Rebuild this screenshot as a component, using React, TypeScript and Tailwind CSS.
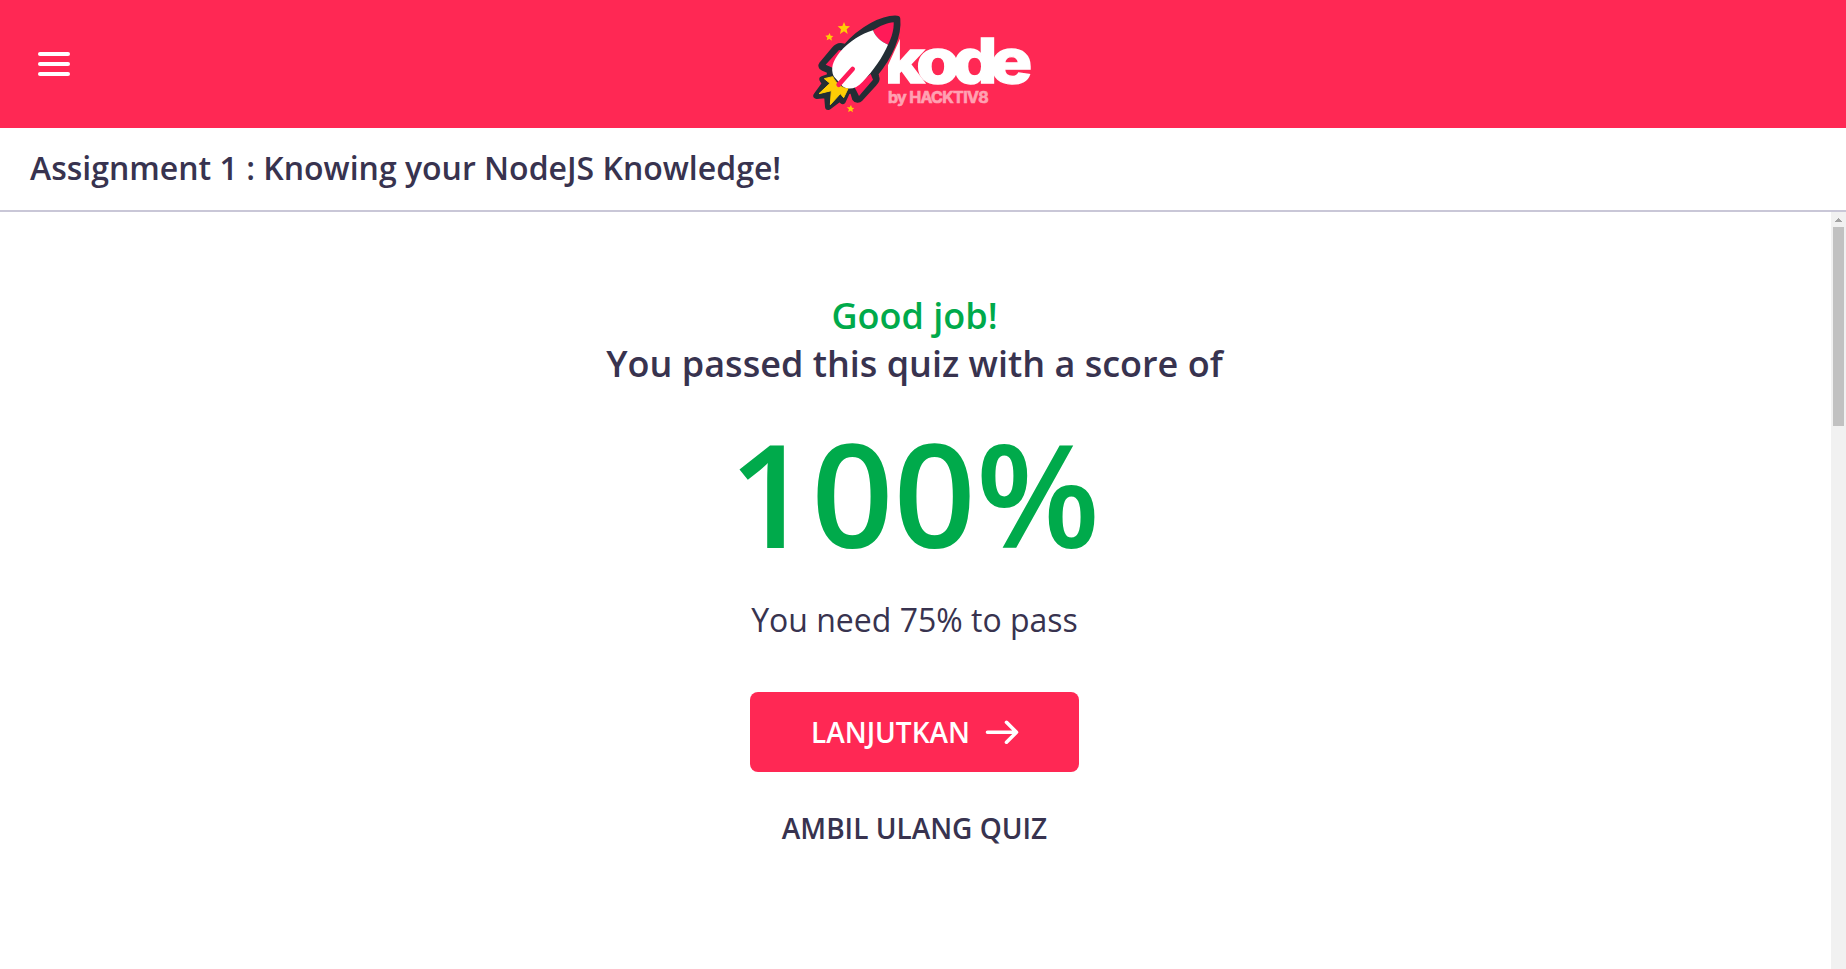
function MenuIcon() {
  return (
    <button aria-label="Menu" className="flex w-8 flex-col gap-1.5">
      <span className="h-1 w-8 rounded-full bg-white" />
      <span className="h-1 w-8 rounded-full bg-white" />
      <span className="h-1 w-8 rounded-full bg-white" />
    </button>
  );
}

function Logo() {
  return (
    <svg width="240" height="128" viewBox="9 0 720 384" aria-label="kode by HACKTIV8">
      <text transform="translate(250 249) scale(1.14 1)" x="0" y="0" fontFamily="Inter, sans-serif" fontWeight="800" fontSize="184" fill="#fff" stroke="#fff" strokeWidth="4" textLength="392" lengthAdjust="spacing">
        kode
      </text>
      <path d="M240 90H298L301 114L264 196V260H240Z" fill="#ff2854" />
      <text x="264" y="308" fontFamily="Inter, sans-serif" fontWeight="700" fontSize="48" fill="#ffa1b2" stroke="#ffa1b2" strokeWidth="2" textLength="302" lengthAdjust="spacing">
        by HACKTIV8
      </text>
      <path
        d="M291 57C250 54 185 88 138 142L121 139C114 139 109 143 104 149L67 193C64 197 65 200 69 202L90 211L91 230L68 238L76 251L50 287L82 284L85 320L119 294L128 302L141 274L158 268L166 295C169 300 176 299 180 295L222 249C228 243 230 238 228 232L225 220C268 168 296 105 291 57Z"
        fill="#232e35" stroke="#232e35" strokeWidth="20" strokeLinejoin="round"
      />
      <path d="M117 150L146 155L104 206L77 194Z" fill="#ff1a58" />
      <path d="M212 222L219 239L177 288L163 260Z" fill="#ff1a58" />
      <path d="M219 91C240 78 263 67 281 67C282 87 276 111 264 134C245 127 226 111 219 91Z" fill="#ff1a58" />
      <path d="M219 91C226 111 245 127 264 134C249 170 219 213 188 245C168 267 145 272 127 258L101 229C91 205 98 184 118 158C150 122 184 102 219 91Z" fill="#fff" />
      <path d="M98 230L73 236L90 250L57 281L94 272L91 314L121 281L131 293L144 266C128 267 109 251 98 230Z" fill="#ffcd05" stroke="#ffcd05" strokeWidth="3" strokeLinejoin="round" />
      <path d="M116 254L158 207" stroke="#ff1a58" strokeWidth="14" strokeLinecap="round" />
      <g fill="#ffcd05">
        <path d="M132 66L137 78L150 79L140 88L143 102L132 94L120 102L123 88L113 79L127 78Z" />
        <path d="M89 99L92 107L100 108L94 114L96 122L88 117L80 121L82 113L76 107L85 106Z" />
        <path d="M153 315L156 323L163 324L157 329L159 337L152 332L144 336L147 328L140 322L149 322Z" />
      </g>
    </svg>
  );
}

function Scrollbar() {
  return (
    <div className="flex w-[15px] shrink-0 flex-col items-center bg-[#f1f1f1]">
      <div className="flex h-[15px] items-center pt-px">
        <svg width="7" height="4" viewBox="0 0 7 4" shapeRendering="crispEdges">
          <path d="M3 0H4V1H5V2H6V3H7V4H0V3H1V2H2V1H3Z" fill="#a3a3a3" />
        </svg>
      </div>
      <div className="h-[199px] w-[11px] bg-[#c1c1c1]" />
    </div>
  );
}

export default function App() {
  return (
    <div className="flex h-screen flex-col overflow-hidden bg-white font-['Open_Sans',sans-serif] text-[#38334f]">
      <header className="grid h-32 shrink-0 grid-cols-[1fr_auto_1fr] items-center bg-[#ff2854]">
        <div className="pl-[38px]">
          <MenuIcon />
        </div>
        <Logo />
        <div />
      </header>
      <div className="flex h-[84px] shrink-0 items-center border-b-2 border-[#c9c7d7] px-[30px] pb-0.5">
        <h1 className="text-[32px] leading-[44px] font-semibold">Assignment 1 : Knowing your NodeJS Knowledge!</h1>
      </div>
      <div className="flex min-h-0 flex-1">
        <main className="flex min-w-0 flex-1 flex-col items-center pt-20 pr-0.5 text-center">
          <h2 className="text-[36px] leading-[48px] font-semibold">
            <span className="block text-[#00aa4b]">Good job!</span>
            You passed this quiz with a score of
          </h2>
          <p className="mt-[29px] text-[144px] leading-[150px] font-semibold text-[#00aa4b]">100%</p>
          <p className="mt-[29px] text-[32px] leading-[48px]">You need 75% to pass</p>
          <button className="mt-12 flex h-20 w-[329px] items-center justify-center gap-[15px] rounded-lg bg-[#ff2854] pl-px text-[28px] font-semibold text-white">
            <span>LANJUTKAN</span>
            <svg width="34" height="24" viewBox="0 0 34 24" fill="none" stroke="#fff" strokeWidth="3.6" strokeLinecap="round" strokeLinejoin="round">
              <path d="M2.5 12.3H31.5M21.5 2.3L31.5 12.3L21.5 22.3" />
            </svg>
          </button>
          <button className="mt-9 text-[28px] leading-10 font-semibold">AMBIL ULANG QUIZ</button>
        </main>
        <Scrollbar />
      </div>
    </div>
  );
}
